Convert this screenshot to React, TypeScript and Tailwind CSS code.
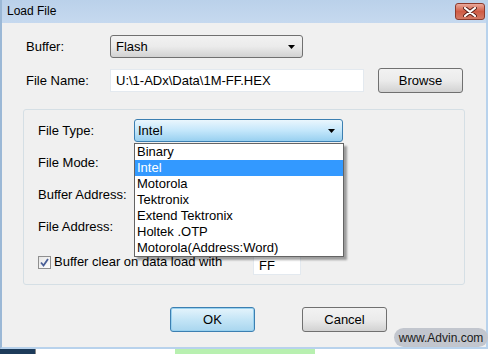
import React from "react";

const font = { fontFamily: '"Liberation Sans", Arial, sans-serif' };

const fileTypes = [
  "Binary",
  "Intel",
  "Motorola",
  "Tektronix",
  "Extend Tektronix",
  "Holtek .OTP",
  "Motorola(Address:Word)",
];

function Arrow() {
  return (
    <svg width="7" height="4" viewBox="0 0 7 4">
      <path d="M0 0h7L3.5 4z" fill="#000" />
    </svg>
  );
}

function CloseButton() {
  return (
    <div className="w-[30px] h-[17px] mt-[3px] rounded-[3px] border border-[#8c3a2c] bg-gradient-to-b from-[#e9a99c] via-[#cf5b44] to-[#d37a66] flex items-center justify-center">
      <svg width="14" height="10" viewBox="0 0 14 10">
        <path d="M2 1l10 8M12 1L2 9" stroke="#5a2018" strokeWidth="4" strokeLinecap="round" />
        <path d="M2 1l10 8M12 1L2 9" stroke="#fff" strokeWidth="2.2" strokeLinecap="round" />
      </svg>
    </div>
  );
}

export default function App() {
  return (
    <div className="w-[492px] h-[354px] bg-white relative overflow-hidden text-[13px] text-black" style={font}>
      <div className="w-[488px] h-[349px] flex flex-col border-l-2 border-r-2 border-b-2 border-[#b8d2ec] border-l-[#9bb8d6]">
        {/* title bar */}
        <div className="h-[23px] flex justify-between pl-[5px] pr-[1px] bg-gradient-to-b from-[#bad1ea] to-[#c6d9ef]">
          <span className="leading-[23px] text-[12px]">Load File</span>
          <CloseButton />
        </div>

        {/* body */}
        <div className="flex-1 bg-[#f0f0f0] pl-[24px] pt-[12px] flex flex-col">
          <div className="flex items-center h-[23px]">
            <span className="w-[84px]">Buffer:</span>
            <div className="w-[193px] h-[23px] rounded-[3px] border border-[#707070] bg-gradient-to-b from-[#f2f2f2] via-[#ebebeb] to-[#d2d2d2] flex items-center justify-between pl-[5px] pr-[7px]">
              <span>Flash</span>
              <Arrow />
            </div>
          </div>

          <div className="flex items-center mt-[11px] h-[23px]">
            <span className="w-[84px]">File Name:</span>
            <div className="w-[254px] h-[23px] bg-white border border-[#e3e9ef] flex items-center pl-[5px]">
              U:\1-ADx\Data\1M-FF.HEX
            </div>
            <div className="ml-[14px] w-[85px] h-[25px] rounded-[3px] border border-[#707070] bg-gradient-to-b from-[#f2f2f2] via-[#ebebeb] to-[#d2d2d2] flex items-center justify-center">
              Browse
            </div>
          </div>

          {/* group box */}
          <div className="mt-[17px] -ml-[3px] w-[442px] h-[176px] border border-[#d5dfe5] rounded-[3px] pl-[14px] pt-[9px] flex flex-col gap-[9px]">
            <div className="flex items-center h-[23px]">
              <span className="w-[96px]">File Type:</span>
              <div className="w-[209px] h-[23px] rounded-[3px] border border-[#3c7fb1] bg-gradient-to-b from-[#eaf6fd] via-[#c4e7fb] to-[#98d0f0] flex items-center justify-between pl-[3px] pr-[7px]">
                <span>Intel</span>
                <Arrow />
              </div>
            </div>
            <div className="flex items-center h-[23px]">
              <span>File Mode:</span>
            </div>
            <div className="flex items-center h-[23px]">
              <span>Buffer Address:</span>
            </div>
            <div className="flex items-center h-[23px]">
              <span>File Address:</span>
            </div>
            <div className="flex items-center h-[22px] mt-[4px]">
              <div className="w-[13px] h-[13px] border border-[#8f8f8f] bg-gradient-to-br from-[#e6e6e6] to-white flex items-center justify-center">
                <svg width="9" height="9" viewBox="0 0 9 9">
                  <path d="M1 4.5l2.5 3L8 1" stroke="#4a5f97" strokeWidth="1.8" fill="none" />
                </svg>
              </div>
              <span className="ml-[3px] w-[199px]">Buffer clear on data load with</span>
              <div className="w-[48px] h-[19px] bg-white border border-[#e3e9ef] mt-[6px] pl-[5px] leading-[18px]">
                FF
              </div>
            </div>
          </div>

          {/* buttons */}
          <div className="flex mt-[22px] pl-[144px] gap-[47px]">
            <div className="w-[85px] h-[25px] rounded-[3px] border border-[#3c7fb1] bg-gradient-to-b from-[#e5f4fc] via-[#c4e5f6] to-[#a9d6ef] flex items-center justify-center shadow-[inset_0_0_0_1px_#98d1ef]">
              OK
            </div>
            <div className="w-[85px] h-[25px] rounded-[3px] border border-[#707070] bg-gradient-to-b from-[#f2f2f2] via-[#ebebeb] to-[#d2d2d2] flex items-center justify-center">
              Cancel
            </div>
          </div>
        </div>
      </div>

      {/* background strip under the dialog */}
      <div className="flex h-[5px]">
        <div className="w-[35px] bg-[#1d3b5a]" />
        <div className="w-[140px] bg-white border-l border-[#888]" />
        <div className="w-[140px] bg-[#b8f0b0]" />
        <div className="flex-1 bg-white" />
      </div>

      {/* dropdown list overlay */}
      <div className="absolute left-[134px] top-[143px] w-[210px] bg-white border border-[#646464] shadow-[3px_3px_2px_rgba(0,0,0,0.35)]">
        {fileTypes.map((t) => (
          <div
            key={t}
            className={
              t === "Intel"
                ? "h-[16px] leading-[16px] pl-[2px] bg-[#3399ff] text-white"
                : "h-[16px] leading-[16px] pl-[2px]"
            }
          >
            {t}
          </div>
        ))}
      </div>

      {/* watermark */}
      <div className="absolute left-[394px] top-[328px] w-[94px] h-[19px] rounded-full bg-[#c2c6ce] flex items-center justify-center text-[12px] text-[#1a1a1a]">
        www.Advin.com
      </div>
    </div>
  );
}
